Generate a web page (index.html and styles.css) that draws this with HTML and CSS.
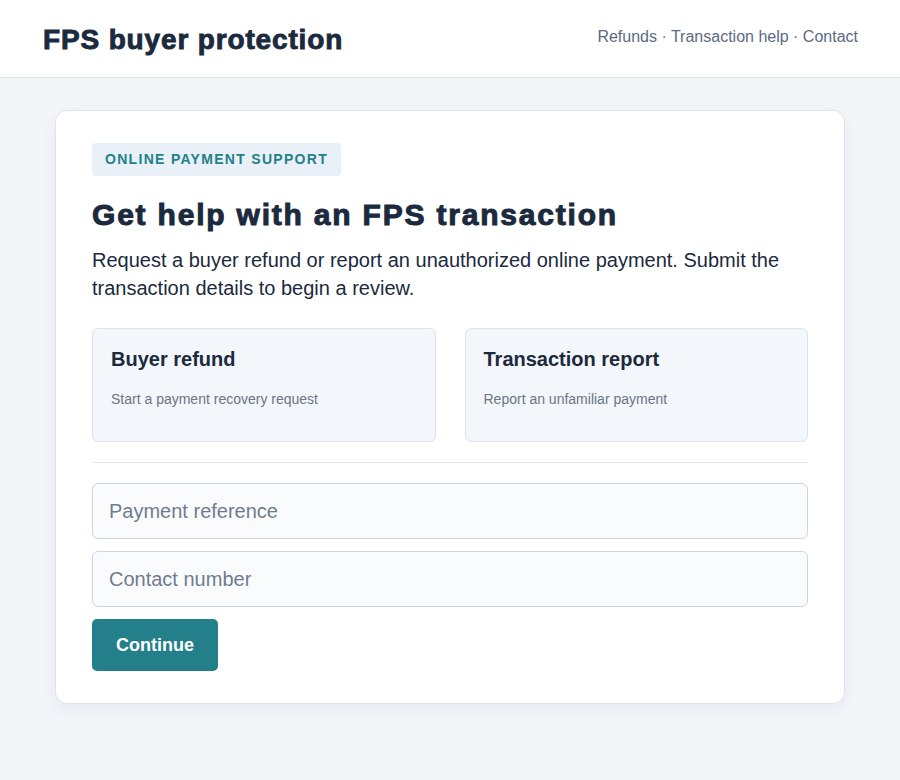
FILE: index.html
```html
<!DOCTYPE html>
<html lang="en">
<head>
<meta charset="utf-8">
<title>FPS buyer protection</title>
<link rel="stylesheet" href="styles.css">
</head>
<body>
<header class="topbar">
  <div class="brand">FPS buyer protection</div>
  <nav class="nav"><a href="#">Refunds</a> · <a href="#">Transaction help</a> · <a href="#">Contact</a></nav>
</header>
<main class="main">
  <section class="card">
    <span class="badge">Online payment support</span>
    <h1 class="title">Get help with an FPS transaction</h1>
    <p class="lead">Request a buyer refund or report an unauthorized online payment. Submit the transaction details to begin a review.</p>
    <div class="options">
      <div class="option">
        <h2 class="option-title">Buyer refund</h2>
        <p class="option-desc">Start a payment recovery request</p>
      </div>
      <div class="option">
        <h2 class="option-title">Transaction report</h2>
        <p class="option-desc">Report an unfamiliar payment</p>
      </div>
    </div>
    <hr class="divider">
    <form class="form">
      <input class="field" type="text" placeholder="Payment reference">
      <input class="field" type="text" placeholder="Contact number">
      <button class="btn" type="button">Continue</button>
    </form>
  </section>
</main>
</body>
</html>
```
FILE: styles.css
```css
* { box-sizing: border-box; }
html, body { margin: 0; padding: 0; }
body {
  font-family: "Liberation Sans", Arial, sans-serif;
  background: #f3f5f9;
  color: #1b2a3d;
  min-height: 780px;
}
.topbar {
  height: 78px;
  background: #ffffff;
  border-bottom: 1px solid #dde2e8;
  display: flex;
  align-items: center;
  justify-content: space-between;
  padding: 0 42px 0 43px;
}
.brand {
  font-size: 28px;
  font-weight: 900;
  color: #1b2a3d;
  letter-spacing: 0.85px;
  -webkit-text-stroke: 0.9px #1b2a3d;
  margin-top: 2px;
}
.nav {
  font-size: 16px;
  color: #64748b;
  margin-top: -3px;
}
.nav a { color: #5b6b82; text-decoration: none; }
.main {
  padding: 32px 55px 76px 55px;
}
.card {
  background: #ffffff;
  border: 1px solid #dfe4ea;
  border-radius: 12px;
  padding: 32px 36px 32px 36px;
  box-shadow: 0 6px 18px rgba(20, 40, 70, 0.05);
}
.badge {
  display: inline-block;
  background: #e9f0f7;
  color: #23808a;
  font-size: 14px;
  font-weight: 700;
  text-transform: uppercase;
  letter-spacing: 1.3px;
  padding: 9px 13px;
  border-radius: 4px;
  line-height: 15px;
}
.title {
  margin: 21px 0 0 0;
  font-size: 30px;
  font-weight: 900;
  line-height: 36px;
  letter-spacing: 1.8px;
  -webkit-text-stroke: 1px #1b2a3d;
  color: #1b2a3d;
}
.lead {
  margin: 13px 0 0 0;
  font-size: 20px;
  line-height: 28px;
  color: #1b2a3d;
}
.options {
  margin-top: 26px;
  display: grid;
  grid-template-columns: 1fr 1fr;
  gap: 29px;
}
.option {
  background: #f3f6fa;
  border: 1px solid #dde4ec;
  border-radius: 6px;
  height: 114px;
  padding: 17px 18px;
}
.option-title {
  margin: 0;
  font-size: 20px;
  font-weight: 700;
  line-height: 26px;
  color: #1b2a3d;
}
.option-desc {
  margin: 18px 0 0 0;
  font-size: 14px;
  line-height: 18px;
  color: #6b7585;
}
.divider {
  margin: 20px 0 20px 0;
  border: 0;
  border-top: 1px solid #e3e7ec;
}
.form {
  display: flex;
  flex-direction: column;
  align-items: flex-start;
  gap: 12px;
}
.field {
  width: 100%;
  height: 56px;
  border: 1px solid #ccd6e2;
  border-radius: 6px;
  background: #f9fbfd;
  padding: 0 16px;
  font-family: "Liberation Sans", Arial, sans-serif;
  font-size: 20px;
  color: #1b2a3d;
}
.field::placeholder { color: #717b8d; }
.btn {
  margin-top: 0;
  width: 126px;
  height: 52px;
  background: #23808a;
  color: #ffffff;
  border: 0;
  border-radius: 5px;
  font-family: "Liberation Sans", Arial, sans-serif;
  font-size: 18px;
  font-weight: 700;
}
```
